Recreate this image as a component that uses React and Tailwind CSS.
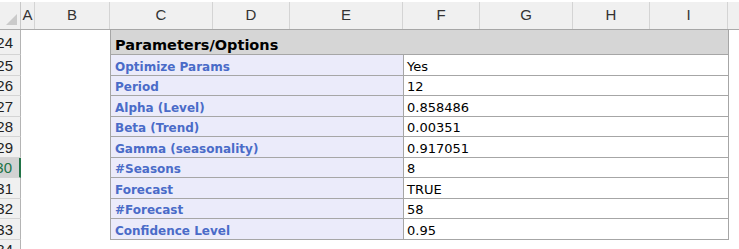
import React from "react";

const cols = [
  { key: "A", w: "w-[14px]" },
  { key: "B", w: "w-[75px]" },
  { key: "C", w: "w-[103px]" },
  { key: "D", w: "w-[77px]" },
  { key: "E", w: "w-[113px]" },
  { key: "F", w: "w-[77px]" },
  { key: "G", w: "w-[93px]" },
  { key: "H", w: "w-[77px]" },
  { key: "I", w: "w-[78px]" },
];

const params = [
  { n: 25, label: "Optimize Params", value: "Yes" },
  { n: 26, label: "Period", value: "12" },
  { n: 27, label: "Alpha (Level)", value: "0.858486" },
  { n: 28, label: "Beta (Trend)", value: "0.00351" },
  { n: 29, label: "Gamma (seasonality)", value: "0.917051" },
  { n: 30, label: "#Seasons", value: "8", selected: true },
  { n: 31, label: "Forecast", value: "TRUE" },
  { n: 32, label: "#Forecast", value: "58" },
  { n: 33, label: "Confidence Level", value: "0.95" },
];

const RowHeader = ({ n, selected, top }) => (
  <div
    className={`w-[21px] shrink-0 h-full overflow-hidden flex ${top ? "items-start pt-[2px]" : "items-center"} justify-end pr-[7px] border-b border-[#d4d4d4] ${
      selected
        ? "bg-[#d2d2d2] text-[#217346] border-r-2 border-r-[#217346]"
        : "bg-[#f0f0f0] text-[#222] border-r border-r-[#b4b4b4]"
    }`}
  >
    <span className="font-['Liberation_Sans',Arial,sans-serif] text-[15px] leading-none">{n}</span>
  </div>
);

export default function App() {
  const cellFont = "font-['DejaVu_Sans',Tahoma,sans-serif]";
  return (
    <div className="w-[739px] h-[249px] bg-white overflow-hidden">
      {/* column headers */}
      <div className="h-[28px] mt-[2px] flex bg-[#f0f0f0] border-b border-[#ababab]">
        <div className="w-[21px] shrink-0 border-r border-[#c8c8c8] relative">
          <div className="absolute right-[3px] bottom-[4px] w-0 h-0 border-l-[11px] border-l-transparent border-b-[11px] border-b-[#cacaca]" />
        </div>
        {cols.map((c) => (
          <div
            key={c.key}
            className={`${c.w} shrink-0 border-r border-[#d4d4d4] flex items-center justify-center text-[15px] text-[#333] font-['Liberation_Sans',Arial,sans-serif]`}
          >
            {c.key}
          </div>
        ))}
        <div className="flex-1" />
      </div>

      {/* row 24 */}
      <div className="h-[25px] flex">
        <RowHeader n={24} />
        <div className="w-[89px] shrink-0" />
        <div className="w-[619px] shrink-0 -mt-px bg-[#d6d6d6] border border-[#a6a6a6] flex items-end pl-[4px] pb-[2px]">
          <span className={`${cellFont} font-bold text-[14.5px] text-black leading-none`}>Parameters/Options</span>
        </div>
        <div className="flex-1" />
      </div>

      {params.map((p, i) => (
        <div key={p.n} className={`${i % 2 === 0 ? "h-[21px]" : "h-[20px]"} flex`}>
          <RowHeader n={p.n} selected={p.selected} />
          <div className="w-[89px] shrink-0" />
          <div className="w-[293px] shrink-0 bg-[#ebebfa] border-l border-b border-[#a6a6a6] flex items-end pl-[4px] pb-[2px]">
            <span className={`${cellFont} font-bold text-[12px] text-[#4a6bc8] leading-none`}>{p.label}</span>
          </div>
          <div className="w-[326px] shrink-0 bg-white border-l border-r border-b border-[#a6a6a6] flex items-end pl-[3px] pb-[2px]">
            <span className={`${cellFont} text-[13px] text-black leading-none`}>{p.value}</span>
          </div>
          <div className="flex-1" />
        </div>
      ))}

      <div className="h-[12px] flex">
        <RowHeader n={34} top />
      </div>
    </div>
  );
}
